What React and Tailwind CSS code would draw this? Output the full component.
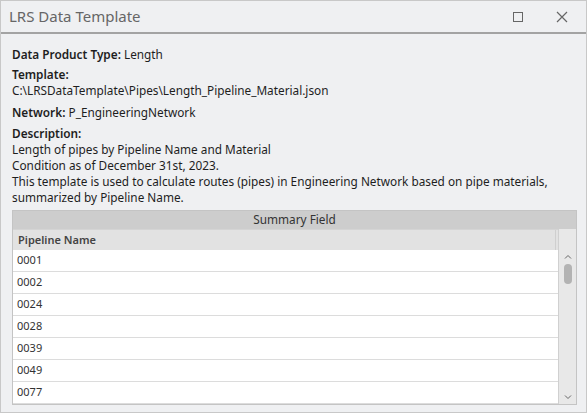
import React from "react";

const rows = ["0001", "0002", "0024", "0028", "0039", "0049", "0077"];

export default function App() {
  return (
    <div
      className="w-[587px] h-[413px] bg-[#eff0f2] border border-[#c8c8c8] flex flex-col overflow-hidden text-[#1e1e1e]"
      style={{ fontFamily: '"Noto Sans", "Open Sans", sans-serif' }}
    >
      {/* title bar */}
      <div className="h-[33px] shrink-0 flex items-center border-b-2 border-[#a3a3a3] pl-[8px]">
        <span className="text-[15px] text-[#666] leading-none">LRS Data Template</span>
        <div className="ml-auto flex items-center">
          <div className="w-[10px] h-[10px] border border-[#666] mr-[33px]" />
          <svg width="12" height="12" viewBox="0 0 12 12" className="mr-[18px]">
            <path d="M1 1L11 11M11 1L1 11" stroke="#666" strokeWidth="1.2" />
          </svg>
        </div>
      </div>

      {/* details */}
      <div className="px-[11px] pt-[12px] text-[11.8px] leading-[16px] flex flex-col">
        <div>
          <b className="font-semibold">Data Product Type:</b> Length
        </div>
        <div className="mt-[4px]">
          <div className="font-semibold">Template:</div>
          <div>C:\LRSDataTemplate\Pipes\Length_Pipeline_Material.json</div>
        </div>
        <div className="mt-[6px]">
          <b className="font-semibold">Network:</b> P_EngineeringNetwork
        </div>
        <div className="mt-[5px]">
          <div className="font-semibold">Description:</div>
          <div>Length of pipes by Pipeline Name and Material</div>
          <div>Condition as of December 31st, 2023.</div>
          <div>
            This template is used to calculate routes (pipes) in Engineering Network based on pipe materials,
          </div>
          <div>summarized by Pipeline Name.</div>
        </div>
      </div>

      {/* table */}
      <div className="mx-[11px] mt-[5px] w-[565px] border border-[#c4c4c4] flex flex-col">
        <div className="h-[18px] bg-[#cdcdcd] flex items-center justify-center text-[11.8px] text-[#333]">
          Summary Field
        </div>
        <div className="flex">
          <div className="flex-1 flex flex-col bg-white">
            <div className="h-[21px] bg-[#e2e2e2] border-t border-[#d4d4d4] flex items-center pl-[5px] pr-[2px]">
              <span className="text-[11px] font-semibold text-[#444]">Pipeline Name</span>
              <div className="ml-auto w-px h-full bg-[#cfcfcf]" />
            </div>
            {rows.map((r) => (
              <div
                key={r}
                className="h-[22px] border-b border-[#dcdcdc] flex items-center pl-[4px] text-[11px] text-[#333]"
              >
                {r}
              </div>
            ))}
          </div>
          <div className="w-[18px] bg-[#e8e8e8] border-l border-[#d0d0d0] flex flex-col items-center pt-[25px] pb-[4px]">
            <svg width="8" height="5" viewBox="0 0 8 5">
              <path d="M1 4.5L4 1.5L7 4.5" stroke="#666" fill="none" strokeWidth="1" />
            </svg>
            <div className="w-[8px] h-[20px] rounded-full bg-[#b3b3b3] mt-[5px]" />
            <svg width="8" height="5" viewBox="0 0 8 5" className="mt-auto">
              <path d="M1 0.5L4 3.5L7 0.5" stroke="#666" fill="none" strokeWidth="1" />
            </svg>
          </div>
        </div>
      </div>
    </div>
  );
}
